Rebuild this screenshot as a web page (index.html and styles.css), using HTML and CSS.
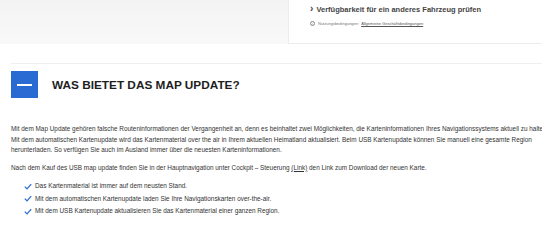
FILE: index.html
```html
<!DOCTYPE html>
<html lang="de">
<head>
  <meta charset="utf-8">
  <title>Map Update</title>
  <link rel="stylesheet" href="styles.css">
</head>
<body>
  <!-- top strip with availability card -->
  <div class="top">
    <div class="top-fill"></div>
    <div class="avail">
      <a class="avail-link" href="#"><span class="chev">&rsaquo;</span> Verfügbarkeit für ein anderes Fahrzeug prüfen</a>
      <p class="terms">
        <span class="info">i</span>
        Nutzungsbedingungen: <a href="#">Allgemeine Geschäftsbedingungen</a>
      </p>
    </div>
  </div>

  <!-- accordion section -->
  <section class="faq">
    <div class="faq-head">
      <span class="toggle"><span class="minus"></span></span>
      <h2>WAS BIETET DAS MAP UPDATE?</h2>
    </div>
    <div class="faq-body">
      <p>Mit dem Map Update gehören falsche Routeninformationen der Vergangenheit an, denn es beinhaltet zwei Möglichkeiten, die Karteninformationen Ihres Navigationssystems aktuell zu halten.<br>Mit dem automatischen Kartenupdate wird das Kartenmaterial over the air in Ihrem aktuellen Heimatland aktualisiert. Beim USB Kartenupdate können Sie manuell eine gesamte Region herunterladen. So verfügen Sie auch im Ausland immer über die neuesten Karteninformationen.</p>
      <p>Nach dem Kauf des USB map update finden Sie in der Hauptnavigation unter Cockpit – Steuerung <a href="#">(Link)</a> den Link zum Download der neuen Karte.</p>
      <ul class="checks">
        <li><svg viewBox="0 0 10 8"><polyline points="1,4.2 3.8,7 9,1"/></svg>Das Kartenmaterial ist immer auf dem neusten Stand.</li>
        <li><svg viewBox="0 0 10 8"><polyline points="1,4.2 3.8,7 9,1"/></svg>Mit dem automatischen Kartenupdate laden Sie Ihre Navigationskarten over-the-air.</li>
        <li><svg viewBox="0 0 10 8"><polyline points="1,4.2 3.8,7 9,1"/></svg>Mit dem USB Kartenupdate aktualisieren Sie das Kartenmaterial einer ganzen Region.</li>
      </ul>
    </div>
  </section>
</body>
</html>
```

FILE: styles.css
```css
/* reset */
* {
  margin: 0;
  padding: 0;
  box-sizing: border-box;
}
body {
  font-family: "Liberation Sans", Arial, sans-serif;
  color: #333;
  background: #fff;
  overflow: hidden;
  width: 542px;
}
a {
  color: inherit;
}
/* top strip */
.top {
  display: flex;
  height: 44px;
}
.top-fill {
  width: 288px;
  background: linear-gradient(#f3f3f3, #f9f9f9);
}
.avail {
  flex: 1;
  background: #fff;
  border-left: 1px solid #ececec;
  border-bottom: 1px solid #ececec;
  padding: 4px 0 0 21px;
}
.avail-link {
  display: block;
  font-size: 7.5px;
  font-weight: bold;
  color: #444;
  text-decoration: none;
  line-height: 10px;
}
.chev {
  font-size: 10px;
  margin-right: 1px;
}
.terms {
  margin-top: 6px;
  display: flex;
  align-items: center;
  gap: 2px;
  font-size: 4px;
  color: #777;
}
.terms a {
  color: #555;
}
.info {
  display: inline-flex;
  align-items: center;
  justify-content: center;
  width: 5px;
  height: 5px;
  border: 0.6px solid #888;
  border-radius: 50%;
  font-size: 3.5px;
  margin-right: 1px;
}
/* accordion */
.faq {
  margin: 19px 0 0 11px;
  border-top: 1px solid #efefef;
}
.faq-head {
  display: flex;
  align-items: center;
  gap: 14px;
  margin-top: 7px;
}
.toggle {
  width: 27px;
  height: 27px;
  background: #2a6bd3;
  display: flex;
  align-items: center;
  justify-content: center;
}
.minus {
  width: 15px;
  height: 2px;
  background: #fff;
}
.faq-head h2 {
  font-size: 11.8px;
  font-weight: bold;
  color: #1e1e1e;
}
.faq-body {
  width: 535px;
  margin-top: 26px;
  font-size: 6.4px;
  line-height: 10.5px;
  color: #333;
}
.faq-body p {
  margin-bottom: 7px;
  white-space: normal;
}
.faq-body p:first-child {
  width: 560px;
}
.checks {
  list-style: none;
  margin-left: 13px;
}
.checks li {
  display: flex;
  align-items: center;
  gap: 3px;
  height: 12.5px;
}
.checks svg {
  width: 8px;
  height: 7px;
  fill: none;
  stroke: #2a6bd3;
  stroke-width: 1.6;
}
```
